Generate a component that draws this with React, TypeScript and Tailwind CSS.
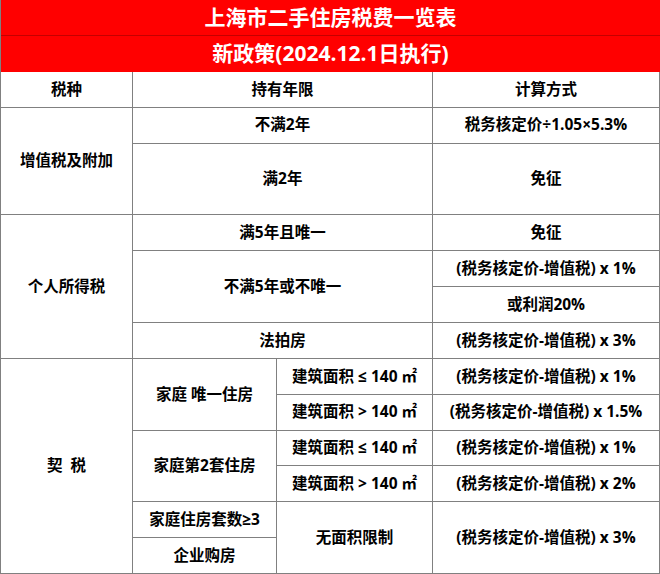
import React from 'react'

const cell =
  'flex items-center justify-center border-r border-b border-[#808080] text-[15.5px] font-bold text-black whitespace-nowrap'

const formula = (rate: string) => `(税务核定价-增值税) x ${rate}`

export default function App() {
  return (
    <div className="w-[660px] h-[574px] bg-white font-['Open_Sans','Noto_Sans_CJK_SC',sans-serif]">
      <div className="grid h-full grid-cols-[132px_144px_156px_1fr] grid-rows-[repeat(16,minmax(0,1fr))] border-l border-[#808080]">
        <div className="col-span-4 flex items-center justify-center bg-[#ff0000] border-b border-[#c40000] text-[21px] font-bold text-white">
          上海市二手住房税费一览表
        </div>
        <div className="col-span-4 flex items-center justify-center bg-[#ff0000] border-b border-[#ff0000] text-[21px] font-bold text-white">
          新政策(2024.12.1日执行)
        </div>

        <div className={cell}>税种</div>
        <div className={`${cell} col-span-2`}>持有年限</div>
        <div className={cell}>计算方式</div>

        {/* 增值税 */}
        <div className={`${cell} row-span-3`}>增值税及附加</div>
        <div className={`${cell} col-span-2`}>不满2年</div>
        <div className={cell}>税务核定价÷1.05×5.3%</div>
        <div className={`${cell} col-span-2 row-span-2`}>满2年</div>
        <div className={`${cell} row-span-2`}>免征</div>

        {/* 个税 */}
        <div className={`${cell} row-span-4`}>个人所得税</div>
        <div className={`${cell} col-span-2`}>满5年且唯一</div>
        <div className={cell}>免征</div>
        <div className={`${cell} col-span-2 row-span-2`}>不满5年或不唯一</div>
        <div className={cell}>{formula('1%')}</div>
        <div className={cell}>或利润20%</div>
        <div className={`${cell} col-span-2`}>法拍房</div>
        <div className={cell}>{formula('3%')}</div>

        {/* 契税 */}
        <div className={`${cell} row-span-6`}>契&nbsp;&nbsp;税</div>
        <div className={`${cell} row-span-2`}>家庭 唯一住房</div>
        <div className={cell}>建筑面积 ≤ 140 ㎡</div>
        <div className={cell}>{formula('1%')}</div>
        <div className={cell}>建筑面积 &gt; 140 ㎡</div>
        <div className={cell}>{formula('1.5%')}</div>
        <div className={`${cell} row-span-2`}>家庭第2套住房</div>
        <div className={cell}>建筑面积 ≤ 140 ㎡</div>
        <div className={cell}>{formula('1%')}</div>
        <div className={cell}>建筑面积 &gt; 140 ㎡</div>
        <div className={cell}>{formula('2%')}</div>
        <div className={cell}>家庭住房套数≥3</div>
        <div className={`${cell} row-span-2`}>无面积限制</div>
        <div className={`${cell} row-span-2`}>{formula('3%')}</div>
        <div className={cell}>企业购房</div>
      </div>
    </div>
  )
}
